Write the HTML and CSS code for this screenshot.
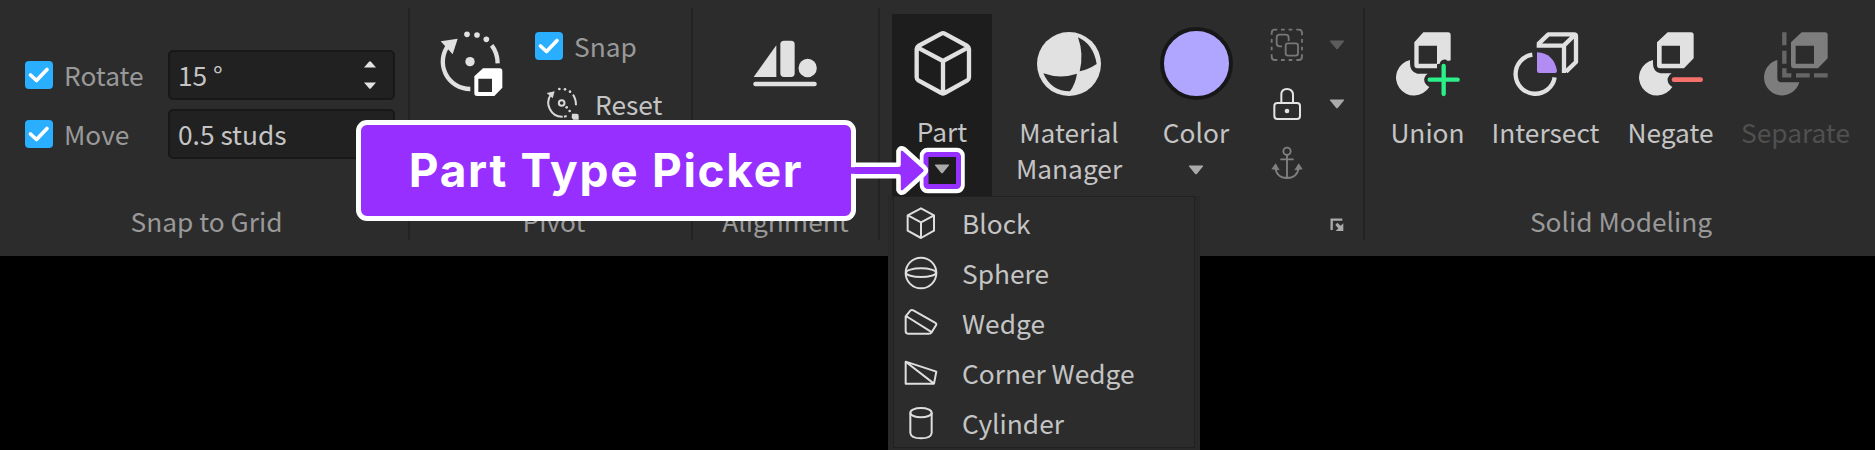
FILE: index.html
```html
<!DOCTYPE html>
<html lang="en">
<head>
<meta charset="utf-8">
<title>Model ribbon</title>
<link rel="stylesheet" href="styles.css">
</head>
<body>
<svg class="defs" width="0" height="0">
  <symbol id="check" viewBox="0 0 28 28"><path d="M5.500 14 11.500 19.500 22 8.500" fill="none" stroke="#fff" stroke-width="3.700" stroke-linecap="round" stroke-linejoin="round"/></symbol>
  <symbol id="caret" viewBox="0 0 16 10"><path d="M1.500 .5h13q1.200 0 .4 1L9 8.700q-1 1-2 0L1.100 1.500q-.8-1 .4-1z" fill="currentColor"/></symbol>
</svg>

<div class="ribbon">
  <section class="group snap-grid">
    <div class="body settings">
      <svg class="checkbox"><use href="#check"/></svg><span class="dim">Rotate</span>
      <div class="field"><span>15 °</span>
        <svg class="spinner" width="12" height="28" viewBox="0 0 12 28" fill="#e3e3e3"><path d="M0 6.500 5 .8q1-1 2 0l5 5.700zM0 21.500l5 5.700q1 1 2 0l5-5.700z"/></svg>
      </div>
      <svg class="checkbox"><use href="#check"/></svg><span class="dim">Move</span>
      <div class="field"><span>0.5 studs</span></div>
    </div>
    <h2>Snap to Grid</h2>
  </section>

  <section class="group pivot">
    <div class="body pivot-body">
      <svg class="pivot-icon" width="66" height="66" viewBox="116 92 198 198">
        <path d="M210 266A82 82 0 0 1 146 132" fill="none" stroke="#e1e1e1" stroke-width="13"/>
        <path d="M121 123 172 115 157 162z" fill="#e1e1e1"/>
        <path d="M274 135Q291 156 292 189" fill="none" stroke="#e1e1e1" stroke-width="13"/>
        <g fill="#e1e1e1"><circle cx="200" cy="102" r="8.500"/><circle cx="230" cy="104" r="8.500"/><circle cx="258" cy="117" r="8.500"/><circle cx="209" cy="184" r="14"/></g>
        <path fill="#fff" fill-rule="evenodd" d="M248 204H298Q306 204 306 212V262L282 287H230Q222 287 222 279V228zM234 235V275H275V235z"/>
      </svg>
      <div class="pivot-options">
        <div class="option"><svg class="checkbox"><use href="#check"/></svg><span class="dim">Snap</span></div>
        <div class="option reset">
          <svg width="34" height="34" viewBox="438 262 102 102" fill="none" stroke="#d8d8d8" stroke-width="6">
            <path d="M488 351A42 42 0 0 1 454 283M519 285Q528 298 528 317M500 349 492 351"/>
            <circle cx="485" cy="310" r="8.500"/>
            <g fill="#d8d8d8" stroke="none"><path d="M440 280 464 275 458 296zM516 342h14q6 0 6 6v12h-16l-5-6z"/><circle cx="478" cy="268" r="4"/><circle cx="495" cy="269" r="4"/><circle cx="510" cy="276" r="4"/><circle cx="500" cy="323" r="4"/><circle cx="509" cy="334" r="4"/></g>
          </svg>
          <span>Reset</span>
        </div>
      </div>
    </div>
    <h2>Pivot</h2>
  </section>

  <section class="group alignment">
    <div class="body">
      <svg class="align-icon" width="66" height="48" viewBox="217 120 198 144" fill="#e1e1e1">
        <path d="M222 231 290 136V231z"/><rect x="302" y="122" width="43" height="109" rx="11"/><circle cx="384" cy="204" r="27.500"/><rect x="221" y="245" width="190" height="14" rx="6"/>
      </svg>
    </div>
    <h2>Alignment</h2>
  </section>

  <section class="group parts">
    <div class="body tools">
      <div class="tool part">
        <svg width="60" height="66" viewBox="700 90 180 198" fill="none" stroke="#e1e1e1" stroke-width="13" stroke-linejoin="round"><path d="M785 101Q790 98 795 101L863 138Q868 141 868 147V232Q868 238 863 241L795 279Q790 282 785 279L716 241Q711 238 711 232V147Q711 141 716 138zM713 142 790 183 866 142M790 183V280"/></svg>
        <span>Part</span><svg class="caret"><use href="#caret"/></svg>
        <div class="menu">
          <ul>
            <li><svg width="34" height="34" viewBox="104 77 102 102" class="line"><path d="M155 84 194 105V151L155 173 115 151V105zM116 105 155 126 194 105M155 126V173"/></svg>Block</li>
            <li><svg width="34" height="34" viewBox="104 227 102 102" class="line"><circle cx="155" cy="278" r="46"/><ellipse cx="155" cy="277" rx="45" ry="13"/></svg>Sphere</li>
            <li><svg width="34" height="34" viewBox="104 377 102 102" class="line"><path d="M109 408 123 391Q127 387 132 390L197 427Q203 430 200 435L187 456Q184 460 179 460H116Q109 460 109 453zM110 407 188 456"/></svg>Wedge</li>
            <li><svg width="34" height="34" viewBox="104 527 102 102" class="line"><path d="M109 544 201 574 194 610H109zM110 545 193 609"/></svg>Corner Wedge</li>
            <li><svg width="34" height="34" viewBox="104 677 102 102" class="line"><ellipse cx="155" cy="697" rx="32" ry="14"/><path d="M123 697V758Q125 774 155 774T187 758V697"/></svg>Cylinder</li>
          </ul>
        </div>
      </div>
      <div class="tool material">
        <svg width="66" height="66" viewBox="108 91 198 198"><circle cx="207" cy="190" r="96" fill="#e1e1e1"/><path d="M234 110Q280 130 290 190Q264 207 239 212Q252 160 234 110zM130 218Q180 236 231 219Q226 250 210 272Q153 272 130 218z" fill="#2c2c2c"/></svg>
        <span>Material<br>Manager</span>
      </div>
      <div class="tool color">
        <i class="swatch"></i><span>Color</span><svg class="caret"><use href="#caret"/></svg>
      </div>
      <div class="mini">
        <svg width="34" height="34" viewBox="810 85 102 102" fill="none" stroke="#777" stroke-width="5.500">
          <path d="M815 105V100Q815 90 825 90H832M843 90H854M866 90H877M889 90H896Q906 90 906 100V107M906 118V129M906 141V152M906 164V171Q906 181 896 181H889M877 181H866M854 181H843M832 181H825Q815 181 815 171V164M815 152V141M815 129V118"/>
          <path d="M866 124V114Q866 105 857 105H839Q830 105 830 114V131Q830 140 839 140H846"/><rect x="857" y="131" width="37" height="37" rx="7"/>
        </svg>
        <svg class="caret faded"><use href="#caret"/></svg>
        <svg width="34" height="34" viewBox="810 262 102 102" fill="none" stroke="#e3e3e3" stroke-width="6"><rect x="823" y="310" width="77" height="48" rx="9"/><path d="M844 309V285Q844 268 861 268T879 285V309"/><circle cx="861" cy="334" r="7" fill="#e3e3e3" stroke="none"/></svg>
        <svg class="caret"><use href="#caret"/></svg>
        <svg width="34" height="34" viewBox="810 441 102 102" fill="none" stroke="#808080" stroke-width="5.500"><circle cx="861" cy="457" r="11"/><path d="M861 468V537M841 481H881M826 506Q830 537 861 537T896 506"/><path d="M814 511 827 493 839 514zM883 514 896 493 908 511z" fill="#808080" stroke="none"/></svg>
      </div>
    </div>
    <div class="footer"><svg width="14" height="14" viewBox="990 654 42 42"><path d="M995 690V659H1027" fill="none" stroke="#aaa" stroke-width="7"/><path d="M1006 675 1012 668 1022 677 1030 670V693H1007L1015 685z" fill="#aaa"/></svg></div>
  </section>

  <section class="group solid">
    <div class="body tools">
      <div class="tool union">
        <svg width="66" height="66" viewBox="75 92 198 198" fill="#e1e1e1">
          <path d="M120 179A54 54 0 1 0 178 260Q160 250 163 234Q166 224 173 220H142Q120 214 120 190z"/>
          <path fill-rule="evenodd" d="M160 96H234Q242 96 242 104V180Q232 184 229 178Q213 176 209 190L201 192V204H142Q133 204 133 195V126zM146 136V190H201V136z"/>
          <path d="M221 197V281M179 238H263" stroke="#2bf08a" stroke-width="13" stroke-linecap="round"/>
        </svg><span>Union</span>
      </div>
      <div class="tool intersect">
        <svg width="66" height="66" viewBox="429 92 198 198" fill="none" stroke="#e1e1e1" stroke-width="13" stroke-linejoin="round">
          <path d="M487 163A59 59 0 1 0 554 231"/>
          <path d="M500 136H582V218M504 132 535 102H612Q618 102 618 108V185L588 214M582 135 614 104"/>
          <path d="M501 156Q552 159 561 212Q561 218 555 218H508Q501 218 501 211z" fill="#b18cf2" stroke="none"/>
        </svg><span>Intersect</span>
      </div>
      <div class="tool negate">
        <svg width="66" height="66" viewBox="114 92 198 198" fill="#e1e1e1">
          <path d="M159 179A54 54 0 1 0 217 260Q201 250 203 234Q206 224 215 219H181Q159 214 159 190z"/>
          <path fill-rule="evenodd" d="M203 96H273Q281 96 281 104V174L252 204H180Q171 204 171 195V126zM185 136V190H240V136z"/>
          <path d="M222 238H302" stroke="#f6706c" stroke-width="14" stroke-linecap="round"/>
        </svg><span>Negate</span>
      </div>
      <div class="tool separate">
        <svg width="66" height="66" viewBox="489 92 198 198" fill="#7d7d7d">
          <path d="M532 179A54 54 0 1 0 598 246H545Q532 246 532 233z"/>
          <path fill-rule="evenodd" d="M605 96H675Q683 96 683 104V174L654 204H582Q573 204 573 195V126zM587 136V190H642V136z"/>
          <path d="M553 96V135M553 151V190M553 204V225H574M588 225H629M642 225H683" fill="none" stroke="#666" stroke-width="13"/>
        </svg><span>Separate</span>
      </div>
    </div>
    <h2>Solid Modeling</h2>
  </section>
</div>

<div class="callout">Part Type Picker</div>
<svg class="pointer" width="120" height="56" viewBox="848 142 120 56" stroke-linejoin="round">
  <rect x="922.500" y="150.500" width="39.500" height="40" rx="5" fill="none" stroke="#fff" stroke-width="5.500"/>
  <rect x="926" y="154.500" width="32.500" height="32" rx="2" fill="none" stroke="#962fff" stroke-width="5"/>
  <path d="M855 164.800H898.500V151Q900 147 904 149L924 167Q928 170.500 924 174L904 192Q900 194 898.500 190V176.200H855" fill="#962fff" stroke="#fff" stroke-width="4.600"/>
  <path d="M848 167.200H862V173.800H848z" fill="#962fff"/>
</svg>
</body>
</html>
```
FILE: styles.css
```css
* { box-sizing: border-box; }
body {
  margin: 0;
  width: 1875px;
  height: 450px;
  overflow: hidden;
  position: relative;
  background: #000;
  color: #c4c4c4;
  font: 26.300px/36px "Noto Sans CJK SC", "Noto Sans", sans-serif;
}
svg { display: block; flex: none; }
.defs { position: absolute; }

.ribbon { display: flex; height: 256px; background: #2c2c2c; }
.group { display: flex; flex-direction: column; position: relative; }
.group + .group::before {
  content: "";
  position: absolute;
  left: -1px;
  top: 8px;
  width: 2px;
  height: 232px;
  background: #232323;
}
.body { height: 196px; }
h2 {
  margin: 7px 0 0;
  font-size: 26.300px;
  font-weight: 400;
  line-height: 36px;
  text-align: center;
  color: #999;
}
.dim { color: #999; }
.checkbox { width: 28px; height: 28px; border-radius: 4px; background: #2aaeff; }
.caret { width: 16px; height: 10px; color: #aaa; }
.faded { color: #5c5c5c; }

.snap-grid { width: 409px; }
.settings {
  display: grid;
  grid-template-columns: 28px 93px 227px;
  grid-template-rows: 50px 50px;
  column-gap: 11px;
  row-gap: 9px;
  align-items: center;
  padding: 50px 0 0 25px;
}
.field {
  display: flex;
  align-items: center;
  justify-content: space-between;
  height: 50px;
  padding: 0 17px 0 8px;
  border: 2px solid #181818;
  border-radius: 5px;
  background: #212121;
}
.snap-grid h2 { padding-left: 4px; }

.pivot { width: 283px; }
.pivot-body { display: flex; padding: 31px 0 0 30px; }
.pivot-options { padding-left: 30px; }
.option { display: flex; align-items: center; gap: 11px; height: 30px; }
.reset { margin: 28px 0 0 11px; gap: 15px; }
.pivot h2 { padding-left: 7px; }

.alignment { width: 187px; }
.align-icon { margin: 40px 0 0 60px; }

.parts { width: 485px; }
.tools { display: flex; }
.tool {
  position: relative;
  display: flex;
  flex-direction: column;
  align-items: center;
  padding-top: 31px;
  text-align: center;
}
.tool > span { margin-top: 17px; line-height: 36px; white-space: nowrap; }
.tool > .caret { margin-top: 15px; }
.part { width: 100px; height: 182px; margin: 14px 0 0 13px; padding: 16px 0 0; background: #1d1d1d; }
.part > svg:first-child { margin-left: 1px; }
.material { width: 154px; }
.color { width: 100px; padding-top: 27px; }
.swatch { width: 73px; height: 73px; border: 4px solid #171717; border-radius: 50%; background: #b1a6ff; }
.color > span { margin-top: 14px; }
.mini {
  display: grid;
  grid-template-columns: 34px 16px;
  grid-template-rows: 34px 34px 34px;
  gap: 25px;
  align-items: center;
  padding: 28px 0 0 24px;
}
.footer { padding: 22px 0 0 451px; }

.menu {
  position: absolute;
  z-index: 2;
  left: -4px;
  top: 182px;
  width: 312px;
  height: 256px;
  padding: 0 5px 0 5px;
  background: #292929;
}
.menu ul {
  height: 252px;
  margin: 0;
  padding: 1px 0 0;
  list-style: none;
  background: #2c2c2c;
  border: 1px solid #212121;
}
.menu li { display: flex; align-items: center; gap: 24px; height: 50px; padding-left: 10px; }
.line { fill: none; stroke: #dedede; stroke-width: 6; stroke-linejoin: round; }

.solid { width: 511px; }
.union { width: 127px; }
.intersect { width: 109px; }
.negate { width: 141px; }
.separate { width: 109px; }
.separate > span { color: #505050; }
.solid h2 { padding-left: 3px; }

.callout {
  position: absolute;
  z-index: 3;
  left: 356px;
  top: 120px;
  width: 500px;
  height: 101px;
  border: 5px solid #fff;
  border-radius: 11px;
  background: #962fff;
  color: #fff;
  font: 700 46px/91px "Inter", sans-serif;
  letter-spacing: 1.700px;
  text-align: center;
  white-space: nowrap;
}
.pointer { position: absolute; z-index: 4; left: 848px; top: 142px; }
```
